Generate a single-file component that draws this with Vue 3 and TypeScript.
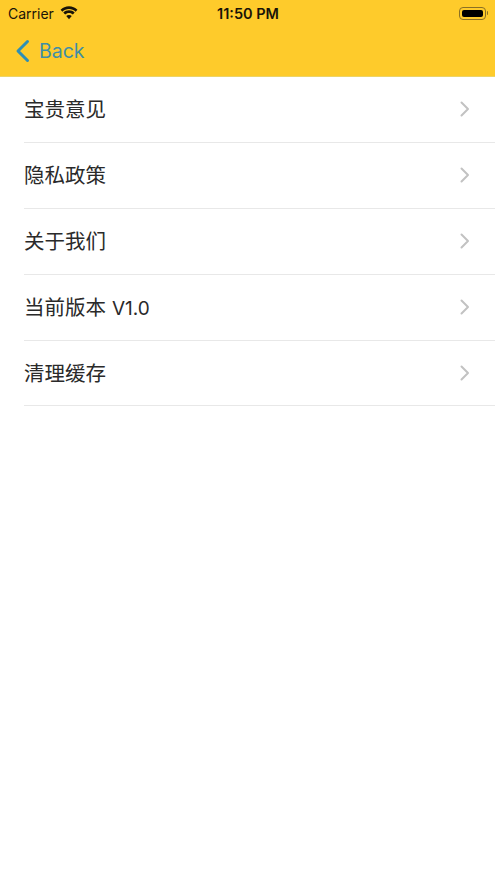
<script setup lang="ts">
interface Item {
  label: string
  version?: string
}
const items: Item[] = [
  { label: '宝贵意见' },
  { label: '隐私政策' },
  { label: '关于我们' },
  { label: '当前版本', version: 'V1.0' },
  { label: '清理缓存' },
]
</script>

<template>
  <div class="page">
    <header class="header">
      <div class="status">
        <div class="status-left">
          <span class="carrier">Carrier</span>
          <svg class="wifi" width="18" height="14" viewBox="0 0 19 14">
            <path d="M9.500 2.900c2.700 0 5.100 1 7 2.800l1.900-2C16.100 1.400 12.900 0 9.500 0S2.900 1.400.6 3.700l1.900 2c1.900-1.800 4.300-2.800 7-2.800z" fill="#1a1408"/>
            <path d="M9.500 7c1.600 0 3 .6 4.100 1.600l1.900-2c-1.600-1.500-3.700-2.400-6-2.400s-4.400.9-6 2.400l1.900 2C6.500 7.600 7.900 7 9.500 7z" fill="#1a1408"/>
            <path d="M9.500 9c-1.100 0-2.100.4-2.900 1.100l2.900 3.400 2.900-3.400C11.600 9.400 10.600 9 9.500 9z" fill="#1a1408"/>
          </svg>
        </div>
        <span class="time">11:50 PM</span>
        <div class="battery">
          <div class="battery-body"><div class="battery-fill"></div></div>
          <div class="battery-cap"></div>
        </div>
      </div>
      <div class="nav">
        <svg class="chevron-back" width="16" height="24" viewBox="0 0 16 24">
          <path d="M12.500 2.500 3 12l9.500 9.500" fill="none" stroke="#2f8fb5" stroke-width="3" stroke-linecap="round" stroke-linejoin="round"/>
        </svg>
        <span class="back">Back</span>
      </div>
    </header>
    <ul class="list">
      <li v-for="item in items" :key="item.label" class="row">
        <span class="label">{{ item.label }}<span v-if="item.version" class="version">{{ item.version }}</span></span>
        <svg class="chevron" width="10" height="16" viewBox="0 0 10 16">
          <path d="M1.500 1.500 8 8l-6.500 6.500" fill="none" stroke="#c2c2c2" stroke-width="2" stroke-linecap="round" stroke-linejoin="round"/>
        </svg>
      </li>
    </ul>
  </div>
</template>

<style>
html, body { margin: 0; background: #fff; }
</style>

<style scoped>
.page {
  width: 495px;
  height: 881px;
  background: #fff;
  overflow: hidden;
  font-family: "Liberation Sans", "Noto Sans CJK SC", sans-serif;
}
.header {
  height: 77px;
  box-sizing: border-box;
  background: #fecb2b;
  border-bottom: 1px solid #ecd468;
}
.status {
  height: 26px;
  box-sizing: border-box;
  padding: 0 7px 0 8px;
  display: grid;
  grid-template-columns: 1fr auto 1fr;
  align-items: center;
  color: #1a1408;
}
.status-left {
  display: flex;
  align-items: center;
  gap: 6px;
}
.carrier {
  font-family: Inter, "Liberation Sans", sans-serif;
  font-size: 14px;
}
.wifi { margin-top: -1px; }
.time {
  font-family: Inter, "Liberation Sans", sans-serif;
  font-size: 14.500px;
  font-weight: 600;
}
.battery {
  justify-self: end;
  display: flex;
  align-items: center;
  gap: 1px;
}
.battery-body {
  width: 27px;
  height: 13px;
  box-sizing: border-box;
  border: 1px solid #8a7024;
  border-radius: 4px;
  padding: 2px;
}
.battery-fill {
  width: 100%;
  height: 100%;
  background: #000;
  border-radius: 2px;
}
.battery-cap {
  width: 1.500px;
  height: 4px;
  background: #8a7024;
  border-radius: 0 1px 1px 0;
}
.nav {
  height: 50px;
  display: flex;
  align-items: center;
  padding-left: 15px;
  gap: 8px;
}
.back {
  font-family: Inter, "Liberation Sans", sans-serif;
  font-size: 19.500px;
  color: #3f8ea6;
}
.list {
  list-style: none;
  margin: 0;
  padding: 0 0 0 24px;
}
.row {
  height: 65.880px;
  box-sizing: border-box;
  padding: 0 25px 2px 0;
  display: flex;
  align-items: center;
  justify-content: space-between;
  border-bottom: 1px solid #e8e8e8;
}
.label {
  font-family: Inter, "Noto Sans CJK SC", sans-serif;
  font-size: 20.500px;
  color: #2a2a2a;
}
.version {
  margin-left: 6px;
  font-size: 19px;
}
.chevron {
  margin-top: 2px;
}
</style>
